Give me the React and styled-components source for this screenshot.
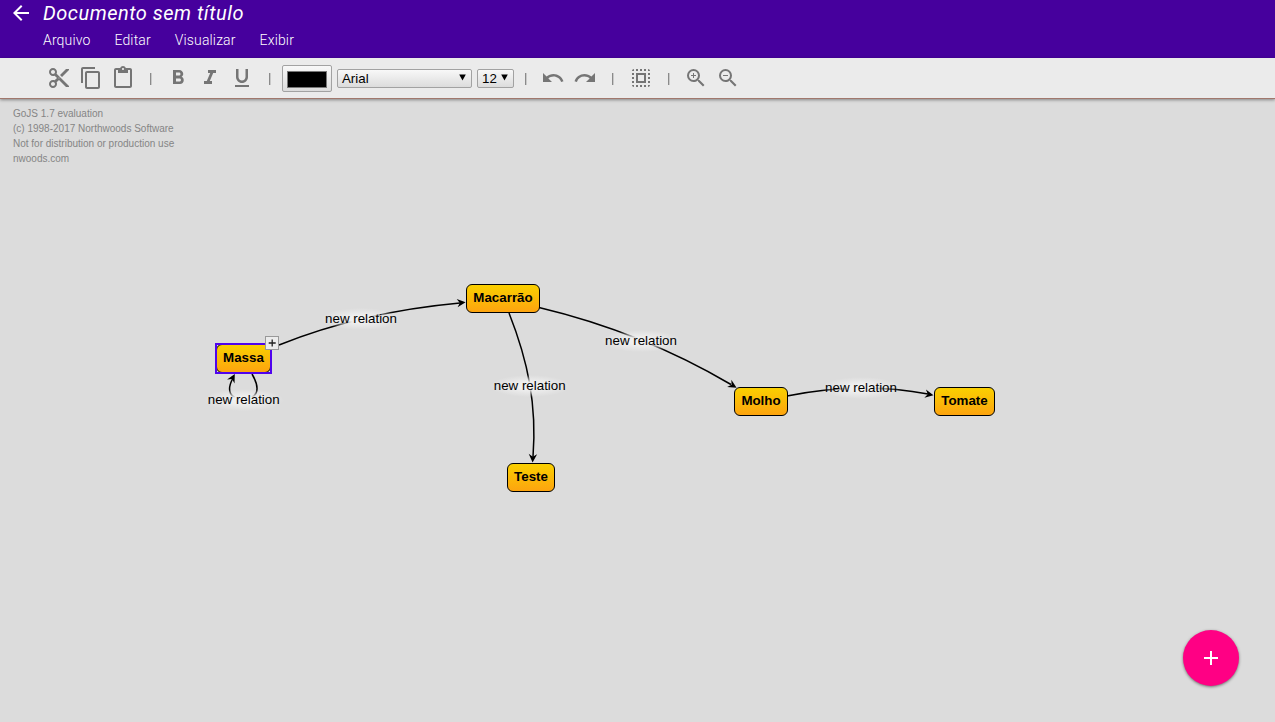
import React from 'react';
import styled, { createGlobalStyle } from 'styled-components';
import {
  MdArrowBack, MdContentCut, MdContentCopy, MdContentPaste, MdFormatBold,
  MdFormatItalic, MdFormatUnderlined, MdUndo, MdRedo, MdSelectAll, MdZoomIn,
  MdZoomOut, MdAdd,
} from 'react-icons/md';

const GlobalStyle = createGlobalStyle`
  * { box-sizing: border-box; }
  body { margin: 0; overflow: hidden; background: #dcdcdc; font-family: Roboto, sans-serif; }
`;

const Page = styled.div`
  display: flex;
  flex-direction: column;
  height: 722px;
  position: relative;
`;

const Header = styled.header`
  display: flex;
  flex: none;
  height: 58px;
  background: #46009d;
  color: #fff;
`;

const BackButton = styled.div`
  width: 43px;
  padding: 1px 0 0 9px;
  svg { display: block; width: 24px; height: 24px; }
`;

const Heading = styled.div`
  display: flex;
  flex-direction: column;
`;

const Title = styled.div`
  height: 26px;
  line-height: 26px;
  font-size: 20px;
  font-style: italic;
  letter-spacing: 0.5px;
  white-space: nowrap;
`;

const Menu = styled.nav`
  display: flex;
  gap: 24px;
  padding-top: 4px;
`;

const MenuItem = styled.span`
  font-size: 14px;
  line-height: 20px;
  font-weight: 300;
  letter-spacing: 0.14px;
  white-space: nowrap;
`;

const Toolbar = styled.div`
  display: flex;
  flex: none;
  align-items: center;
  height: 41px;
  padding-left: 47px;
  background: #ebebeb;
  border-bottom: 1px solid #a1786d;
  box-shadow: 0 1px 3px rgba(0, 0, 0, 0.4);
  color: #757575;
  z-index: 1;
`;

const Tools = styled.div`
  display: flex;
  gap: 8px;
  svg { display: block; width: 24px; height: 24px; }
`;

const Divider = styled.span`
  width: ${(p) => p.$width}px;
  padding-left: ${(p) => p.$inset}px;
  font: 13.33px/24px "Liberation Sans", sans-serif;
  will-change: transform;
`;

const Raised = styled.div`
  border: 1px solid #a2a2a2;
  border-radius: 2px;
  background: linear-gradient(#f8f8f8, #dcdcdc);
`;

const ColorPicker = styled(Raised)`
  width: 50px;
  height: 27px;
  padding: 5px 4px;
  margin: 1px 5px 0 0;
  &::before {
    content: '';
    display: block;
    height: 15px;
    background: #000;
    border: 1px solid #777;
  }
`;

const Select = styled(Raised)`
  display: flex;
  align-items: center;
  justify-content: space-between;
  width: ${(p) => p.$width}px;
  height: 19px;
  padding: 0 5px 0 4px;
  margin: 1px ${(p) => p.$after || 0}px 0 0;
  color: #000;
  font: 13.33px/17px "Liberation Sans", sans-serif;
  svg { display: block; margin-top: -2px; }
`;

const Canvas = styled.main`
  position: relative;
  flex: 1;
  font-family: "Liberation Sans", sans-serif;
`;

const Watermark = styled.div`
  padding: 7px 13px;
  font-size: 10px;
  line-height: 15px;
  color: #858585;
`;

const Links = styled.svg`
  position: absolute;
  left: 0;
  top: -99px;
  width: 1275px;
  height: 722px;
  pointer-events: none;
`;

const Node = styled.div`
  position: absolute;
  left: ${(p) => p.$x}px;
  top: ${(p) => p.$y - 99}px;
  width: ${(p) => p.$w}px;
  height: 29px;
  border: 1px solid #000;
  border-radius: 6px;
  background: linear-gradient(#fad000, #fda40f);
  color: #000;
  font-size: 13.33px;
  font-weight: bold;
  line-height: 26px;
  text-align: center;
  white-space: nowrap;
`;

const Selection = styled.div`
  position: absolute;
  left: 215px;
  top: 244px;
  width: 57px;
  height: 31px;
  border: 2px solid #5004ed;
`;

const ExpandHandle = styled.div`
  position: absolute;
  left: 265px;
  top: 237px;
  width: 14px;
  height: 14px;
  border: 1px solid #999;
  background: #ececec;
  svg { display: block; }
`;

const LinkLabel = styled.div`
  position: absolute;
  left: ${(p) => p.$x - 40}px;
  top: ${(p) => p.$y - 99 - 11}px;
  width: 80px;
  height: 22px;
  background: radial-gradient(closest-side, rgb(240, 240, 240) 0%, rgb(240, 240, 240) 30%, rgba(240, 240, 240, 0) 100%);
  color: #000;
  font-size: 13.33px;
  line-height: 22px;
  text-align: center;
  white-space: nowrap;
`;

const AddButton = styled.div`
  position: absolute;
  right: 36px;
  bottom: 36px;
  width: 56px;
  height: 56px;
  display: flex;
  align-items: center;
  justify-content: center;
  border-radius: 50%;
  background: #ff0084;
  color: #fff;
  box-shadow: 0 1px 3px rgba(0, 0, 0, 0.5);
  svg { width: 24px; height: 24px; }
`;

const Caret = () => (
  <svg width="7" height="7" viewBox="0 0 7 7"><path d="M0.2 0.5h6.6L3.5 6.6z" fill="#000" /></svg>
);

const links = [
  { d: 'M279 345 Q361 312 460 303', tip: [465.6, 302.3], angle: -6 },
  { d: 'M509 313 C528 361 537 405 533 457', tip: [532.6, 462.5], angle: 92 },
  { d: 'M539 307.5 Q642 332 731 384.5', tip: [736.6, 387.7], angle: 30 },
  { d: 'M787 396 Q861 381 928 394', tip: [933.5, 395.3], angle: 11 },
  { d: 'M252 374 C262 391 256 399 243 399 C230 399 226 391 233 378', tip: [234.8, 374], angle: -62 },
];

const labels = [[361, 319], [529.7, 386], [641, 341], [861, 388], [243.7, 400]];

const nodes = [
  ['Massa', 216, 344, 55], ['Macarrão', 466, 284, 74], ['Molho', 734, 387, 54],
  ['Tomate', 934, 387, 61], ['Teste', 507, 463, 48],
];

export default function App() {
  return (
    <Page>
      <GlobalStyle />
      <Header>
        <BackButton><MdArrowBack /></BackButton>
        <Heading>
          <Title>Documento sem título</Title>
          <Menu>
            {['Arquivo', 'Editar', 'Visualizar', 'Exibir'].map((m) => <MenuItem key={m}>{m}</MenuItem>)}
          </Menu>
        </Heading>
      </Header>
      <Toolbar>
        <Tools><MdContentCut /><MdContentCopy /><MdContentPaste /></Tools>
        <Divider $width={31.4} $inset={14}>|</Divider>
        <Tools><MdFormatBold /><MdFormatItalic /><MdFormatUnderlined /></Tools>
        <Divider $width={27.6} $inset={14}>|</Divider>
        <ColorPicker />
        <Select $width={135} $after={5}>Arial<Caret /></Select>
        <Select $width={37}>12<Caret /></Select>
        <Divider $width={27} $inset={10}>|</Divider>
        <Tools><MdUndo /><MdRedo /></Tools>
        <Divider $width={32} $inset={14}>|</Divider>
        <Tools><MdSelectAll /></Tools>
        <Divider $width={31} $inset={14}>|</Divider>
        <Tools><MdZoomIn /><MdZoomOut /></Tools>
      </Toolbar>
      <Canvas>
        <Watermark>
          <div>GoJS 1.7 evaluation</div>
          <div>(c) 1998-2017 Northwoods Software</div>
          <div>Not for distribution or production use</div>
          <div>nwoods.com</div>
        </Watermark>
        <Links viewBox="0 0 1275 722">
          {links.map((l) => (
            <g key={l.d}>
              <path d={l.d} fill="none" stroke="#000" strokeWidth="1.5" />
              <path d="M-8.5 -4.2L0 0L-8.5 4.2L-5.8 0Z" transform={`translate(${l.tip}) rotate(${l.angle})`} />
            </g>
          ))}
        </Links>
        {labels.map(([x, y]) => <LinkLabel key={x} $x={x} $y={y}>new relation</LinkLabel>)}
        {nodes.map(([name, x, y, w]) => <Node key={name} $x={x} $y={y} $w={w}>{name}</Node>)}
        <Selection />
        <ExpandHandle>
          <svg width="12" height="12"><path d="M2.7 6h7M6.2 2.5v7" stroke="#222" strokeWidth="1.3" /></svg>
        </ExpandHandle>
      </Canvas>
      <AddButton><MdAdd /></AddButton>
    </Page>
  );
}
